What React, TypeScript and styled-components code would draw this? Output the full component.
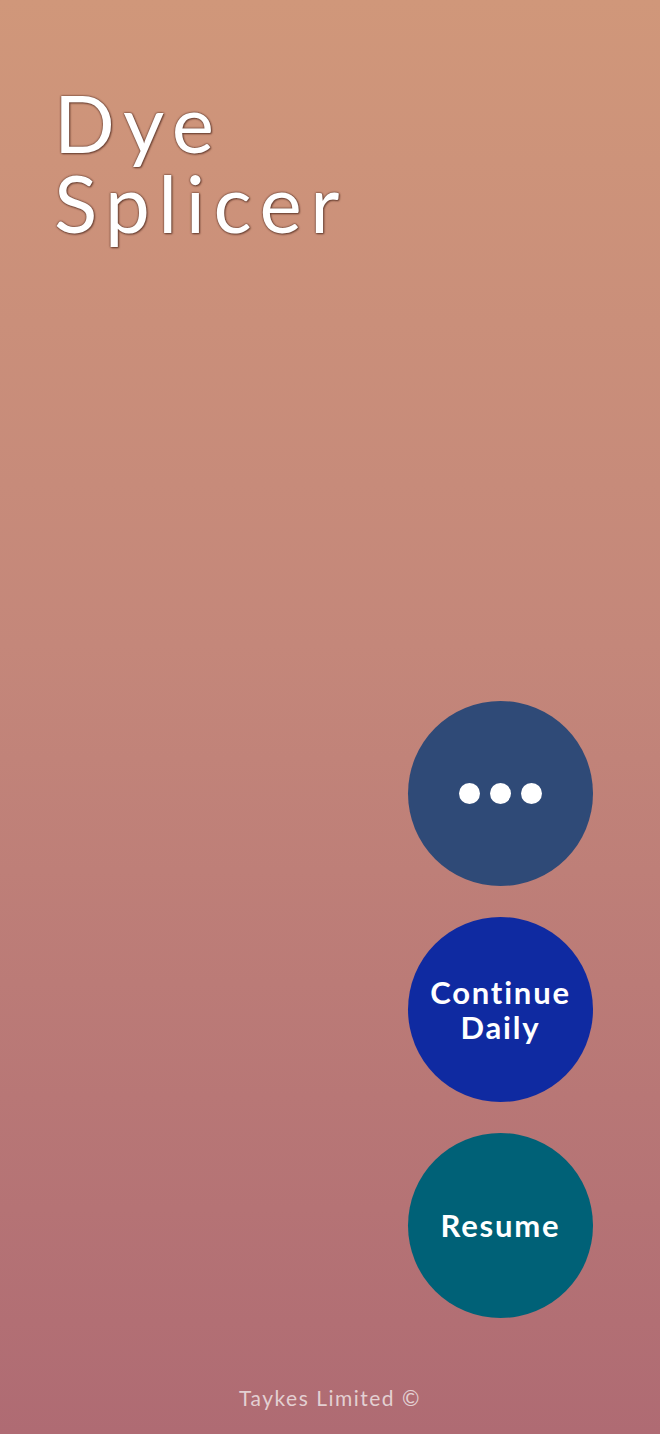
import React from "react";
import styled, { createGlobalStyle } from "styled-components";

const Global = createGlobalStyle`
  html, body { margin: 0; padding: 0; }
  body { font-family: "Lato", "Noto Sans", sans-serif; }
`;

const Page = styled.div`
  width: 660px;
  height: 1434px;
  box-sizing: border-box;
  background: linear-gradient(180deg, #d0977a 0%, #c4877a 45%, #af6b73 100%);
  display: flex;
  flex-direction: column;
  overflow: hidden;
`;

const Title = styled.h1`
  margin: 0;
  padding: 82px 0 0 54px;
  display: flex;
  flex-direction: column;
  font-family: "Lato", "Noto Sans", sans-serif;
  font-weight: 400;
  font-size: 80px;
  line-height: 80px;
  color: #ffffff;
  letter-spacing: 8.5px;
  text-shadow: 0 0 2px #6e4436, 0 0 2px #6e4436, 1px 1px 2px #6e4436;
`;

const TitleLine = styled.span`
  display: block;
  height: 80px;
`;

const Actions = styled.div`
  margin-top: auto;
  display: flex;
  flex-direction: column;
  align-items: flex-end;
  gap: 31px;
  padding-right: 67px;
`;

const Circle = styled.button<{ $bg: string }>`
  width: 185px;
  height: 185px;
  border-radius: 50%;
  border: none;
  background: ${(p) => p.$bg};
  color: #ffffff;
  display: flex;
  align-items: center;
  justify-content: center;
  font-family: "Lato", "Noto Sans", sans-serif;
  font-weight: 700;
  font-size: 31px;
  line-height: 35px;
  letter-spacing: 1.8px;
  text-align: center;
  padding: 0;
  cursor: pointer;
`;

const Dots = styled.div`
  display: flex;
  gap: 10px;
`;

const Dot = styled.span`
  width: 21px;
  height: 21px;
  border-radius: 50%;
  background: #ffffff;
`;

const Footer = styled.footer`
  padding: 67px 0 24px;
  text-align: center;
  font-family: "Lato", "Noto Sans", sans-serif;
  font-size: 21px;
  color: #e3d0d2;
  letter-spacing: 1.5px;
`;

export default function App() {
  return (
    <>
      <Global />
      <Page>
        <Title>
          <TitleLine>Dye</TitleLine>
          <TitleLine>Splicer</TitleLine>
        </Title>
        <Actions>
          <Circle $bg="#2f4a77" aria-label="More">
            <Dots>
              <Dot />
              <Dot />
              <Dot />
            </Dots>
          </Circle>
          <Circle $bg="#0f2aa1">
            Continue
            <br />
            Daily
          </Circle>
          <Circle $bg="#006177">Resume</Circle>
        </Actions>
        <Footer>Taykes Limited ©</Footer>
      </Page>
    </>
  );
}
